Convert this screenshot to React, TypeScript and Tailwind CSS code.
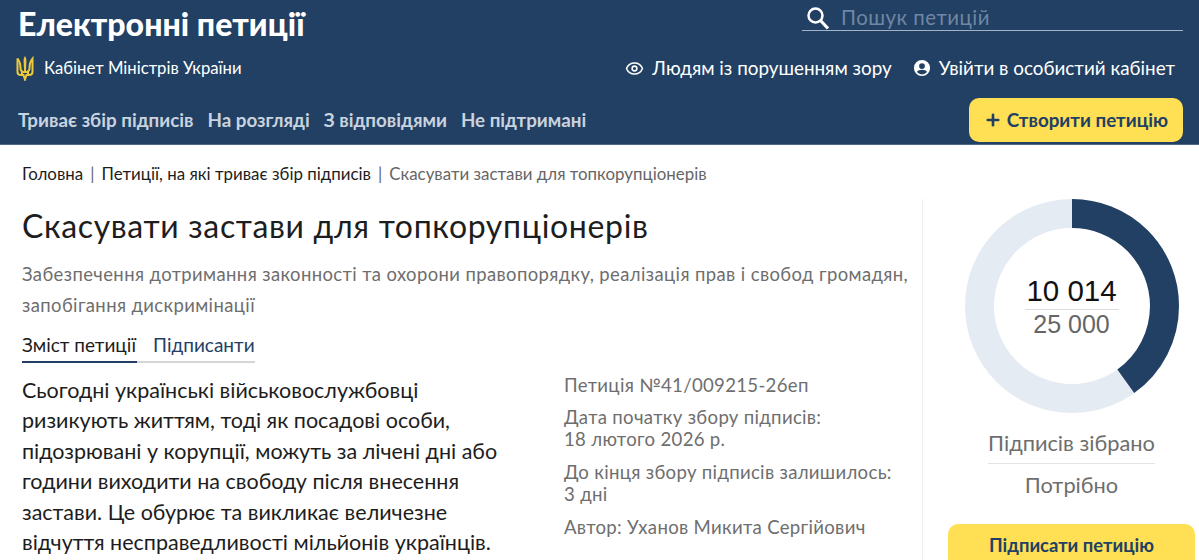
import { Eye, Plus } from "lucide-react";

const NAV_ITEMS = ["Триває збір підписів", "На розгляді", "З відповідями", "Не підтримані"];

const BODY_LINES = [
  "Сьогодні українські військовослужбовці",
  "ризикують життям, тоді як посадові особи,",
  "підозрювані у корупції, можуть за лічені дні або",
  "години виходити на свободу після внесення",
  "застави. Це обурює та викликає величезне",
  "відчуття несправедливості мільйонів українців.",
];

function Trident() {
  return (
    <svg viewBox="0 0 18 26" className="ml-[-2px] h-[26px] w-[18px] shrink-0" fill="none" stroke="#edc93a" strokeWidth="2">
      <path d="M9 1c1 1.500 1.400 3 1.400 5l-.5 11H8.100L7.600 6c0-2 .4-3.500 1.400-5Z" fill="#edc93a" stroke="none" />
      <path d="M1.500 3.500V17c0 2 1.500 3 3.500 3h2.500L9 24.500 10.500 20H13c2 0 3.500-1 3.500-3V3.500C14.500 6 13.500 9 13.500 13c0 1.500-.5 3-2 3.500" />
      <path d="M1.500 3.500C3.500 6 4.500 9 4.500 13c0 1.500.5 3 2 3.500" />
      <path d="M6 20v-3h6v3" />
    </svg>
  );
}

function SearchGlyph() {
  return (
    <svg viewBox="0 0 24 24" className="size-[24px] shrink-0" fill="none" stroke="white">
      <circle cx="9.500" cy="9.500" r="7" strokeWidth="2.500" />
      <path d="M14.500 14.500 22 22.500" strokeWidth="3.200" />
    </svg>
  );
}

function UserCircle() {
  return (
    <svg viewBox="0 0 20 20" className="size-[18px] shrink-0" fill="white">
      <path d="M10 1a9 9 0 1 0 0 18 9 9 0 0 0 0-18Zm0 3.600a3.200 3.200 0 1 1 0 6.400 3.200 3.200 0 0 1 0-6.400Zm0 12.500a7.200 7.200 0 0 1-5.600-2.700c.6-1.500 3.300-2.400 5.600-2.400s5 .9 5.600 2.400A7.200 7.200 0 0 1 10 17.100Z" />
    </svg>
  );
}

function Donut() {
  const radius = 92.5;
  const circumference = 2 * Math.PI * radius;
  const collected = (10014 / 25000) * circumference;
  return (
    <svg viewBox="0 0 214 214" className="absolute inset-0 size-[214px] -rotate-90">
      <circle cx="107" cy="107" r={radius} fill="none" stroke="#e4ebf2" strokeWidth="29" />
      <circle
        cx="107"
        cy="107"
        r={radius}
        fill="none"
        stroke="#224064"
        strokeWidth="29"
        strokeDasharray={`${collected} ${circumference}`}
      />
    </svg>
  );
}

export default function App() {
  return (
    <div className="h-[560px] w-[1199px] overflow-hidden bg-white font-['Lato','Noto_Sans',sans-serif] text-[#1d1d1d]">
      <header className="flex h-[145px] justify-between border-b border-[#50688a] bg-[#224064] pl-[18px] pr-4 text-white">
        <div className="flex flex-col">
          <h1 className="mt-[2px] text-[32.100px] leading-[44px] font-black">Електронні петиції</h1>
          <div className="mt-[9px] flex items-center gap-[10px] text-[16.700px] leading-[26px]">
            <Trident />
            <span>Кабінет Міністрів України</span>
          </div>
          <nav className="mt-[26px] flex gap-[14px] text-[18.800px] leading-[26px] font-bold text-[#c9d3df]">
            {NAV_ITEMS.map((item) => (
              <a key={item}>{item}</a>
            ))}
          </nav>
        </div>
        <div className="flex flex-col items-end">
          <div className="mt-[5px] flex h-[26px] w-[381px] items-center gap-[11px] border-b border-[#a3b2c4] pl-[4px]">
            <SearchGlyph />
            <span className="text-[20.400px] tracking-[0.5px] text-[#6f87a3]">Пошук петицій</span>
          </div>
          <div className="mt-[24px] flex items-center pr-[8px] text-[18.850px] leading-[26px]">
            <Eye className="size-[19px]" strokeWidth={2} />
            <span className="ml-[8px]">Людям із порушенням зору</span>
            <span className="ml-[21px]">
              <UserCircle />
            </span>
            <span className="ml-[8px]">Увійти в особистий кабінет</span>
          </div>
          <button className="mt-[17px] flex h-[44px] w-[214px] items-center justify-center gap-[5px] rounded-[10px] bg-[#ffdf54] text-[18.800px] font-bold text-[#224064]">
            <Plus className="size-[18px]" strokeWidth={3.5} />
            Створити петицію
          </button>
        </div>
      </header>

      <main>
        <div className="flex h-[54px] gap-[7px] pl-[22px] pt-[17px] text-[16.900px] leading-[24px] text-[#666]">
          <span className="text-[#1d1d1d]">Головна</span>
          <span>|</span>
          <span className="text-[#1d1d1d]">Петиції, на які триває збір підписів</span>
          <span>|</span>
          <span>Скасувати застави для топкорупціонерів</span>
        </div>
        <div className="flex">
          <div className="w-[923px] shrink-0 border-r border-[#eeeeee] pl-[22px] pt-[3px]">
            <h2 className="text-[32px] leading-[48px] tracking-[0.66px]">Скасувати застави для топкорупціонерів</h2>
            <p className="mt-[9px] w-[895px] text-[18.450px] leading-[31px] tracking-[0.4px] text-[#6e6e6e]">
              Забезпечення дотримання законності та охорони правопорядку, реалізація прав і свобод громадян, запобігання
              дискримінації
            </p>
            <div className="mt-[9px] flex w-[233px] text-[19px] leading-[30px]">
              <span className="border-b-2 border-[#224064] pb-[1px] pr-[1px]">Зміст петиції</span>
              <span className="flex-1 border-b-2 border-[#d5d5d5] pb-[1px] pl-[16px] text-[#224064]">Підписанти</span>
            </div>
            <div className="mt-[12px] flex">
              <div className="w-[542px] shrink-0 text-[21.500px] leading-[30.400px]">
                {BODY_LINES.map((line) => (
                  <p key={line}>{line}</p>
                ))}
              </div>
              <div className="mt-[-5px] text-[18.600px] leading-[22px] tracking-[0.3px] text-[#6e6e6e]">
                <p className="mt-[4px]">Петиція №41/009215-26еп</p>
                <p className="mt-[10px]">
                  Дата початку збору підписів:
                  <br />
                  18 лютого 2026 р.
                </p>
                <p className="mt-[11px]">
                  До кінця збору підписів залишилось:
                  <br />3 дні
                </p>
                <p className="mt-[11px]">Автор: Уханов Микита Сергійович</p>
              </div>
            </div>
          </div>

          <aside className="flex flex-1 flex-col items-center pl-[25px] pr-[4px]">
            <div className="relative size-[214px] shrink-0">
              <Donut />
              <div className="absolute inset-0 flex flex-col items-center justify-center font-['Liberation_Sans',sans-serif]">
                <span className="w-[94px] border-b border-[#dddddd] text-center text-[29.500px] leading-[36px] text-[#111]">
                  10 014
                </span>
                <span className="text-[25px] leading-[29px] text-[#666]">25 000</span>
              </div>
            </div>
            <span className="mt-[14px] w-[167px] whitespace-nowrap border-b border-[#e4e4e4] pb-[4px] text-center text-[21.800px] leading-[32px] text-[#6e6e6e]">
              Підписів зібрано
            </span>
            <span className="mt-[4px] text-[21.800px] leading-[34px] text-[#6e6e6e]">Потрібно</span>
            <button className="mt-[22px] flex h-[44px] w-full shrink-0 items-center justify-center rounded-[10px] bg-[#ffdf54] text-[18.400px] font-bold text-[#224064]">
              Підписати петицію
            </button>
          </aside>
        </div>
      </main>
    </div>
  );
}
